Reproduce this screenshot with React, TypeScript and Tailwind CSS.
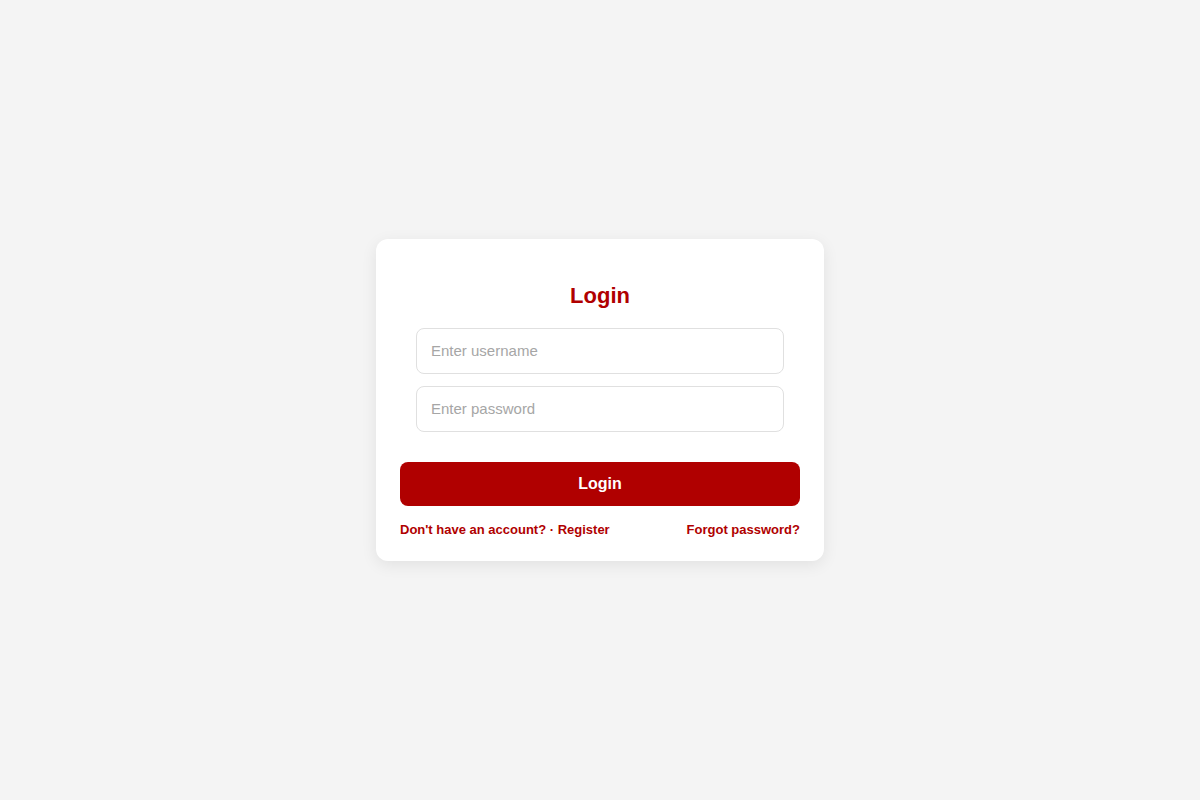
import React from "react";

export default function App() {
  return (
    <div
      className="min-h-screen w-full bg-[#f4f4f4] flex items-center justify-center"
      style={{ fontFamily: '"Liberation Sans", Arial, sans-serif' }}
    >
      <div className="w-[448px] bg-white rounded-[12px] shadow-[0_4px_16px_rgba(0,0,0,0.08)] pt-[44px] px-6 pb-6">
        <h2 className="text-center text-[22px] leading-[25px] font-bold text-[#b00000] mb-[20px]">
          Login
        </h2>
        <div className="px-4 flex flex-col gap-3">
          <input
            type="text"
            placeholder="Enter username"
            className="h-[46px] w-full rounded-[8px] border border-[#e0e0e0] px-[14px] pb-[2px] text-[15px] text-[#333] placeholder:text-[#a6a6a6] outline-none bg-white"
          />
          <input
            type="password"
            placeholder="Enter password"
            className="h-[46px] w-full rounded-[8px] border border-[#e0e0e0] px-[14px] pb-[2px] text-[15px] text-[#333] placeholder:text-[#a6a6a6] outline-none bg-white"
          />
        </div>
        <button className="mt-[30px] h-[44px] w-full rounded-[8px] bg-[#b00000] text-white text-[16px] font-bold">
          Login
        </button>
        <div className="mt-4 flex items-center justify-between text-[13px] leading-[15px] font-bold text-[#b00000]">
          <span>Don't have an account? · Register</span>
          <span>Forgot password?</span>
        </div>
      </div>
    </div>
  );
}
